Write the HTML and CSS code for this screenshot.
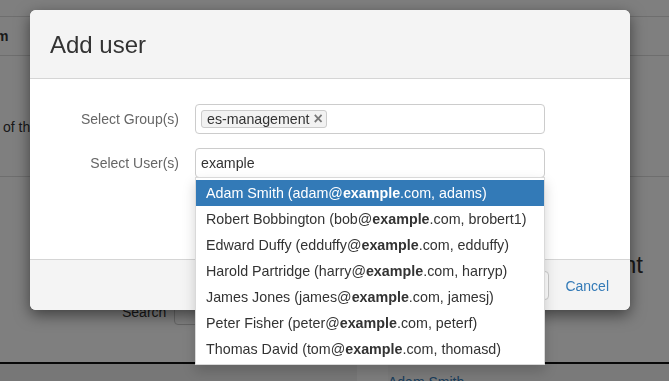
FILE: index.html
```html
<!DOCTYPE html>
<html lang="en">
<head>
    <meta charset="UTF-8">
    <meta name="viewport" content="width=device-width, initial-scale=1.0">
    <title>Add user</title>
    <link rel="stylesheet" href="styles.css">
</head>
<body>
<div class="page">
    <table class="groups">
        <thead>
            <tr><th>Team</th></tr>
        </thead>
        <tbody>
            <tr><td>of the group can manage its members and settings.</td></tr>
        </tbody>
    </table>
    <h3 class="section-title">Group management</h3>
    <div class="search-row">
        <label for="search">Search</label>
        <input id="search" type="text">
    </div>
    <table class="members">
        <tr>
            <td class="pad"></td>
            <td class="check"></td>
            <td><a href="#">Adam Smith</a></td>
        </tr>
    </table>
</div>

<div class="backdrop"></div>

<div class="modal">
    <div class="modal-header">
        <h4>Add user</h4>
    </div>
    <div class="modal-body">
        <div class="form-row">
            <label>Select Group(s)</label>
            <div class="select-box">
                <span class="tag">es-management <span class="tag-remove">&times;</span></span>
            </div>
        </div>
        <div class="form-row">
            <label>Select User(s)</label>
            <div class="select-wrap">
                <div class="select-box">
                    <span class="query">example</span>
                </div>
                <ul class="results">
                    <li class="active">Adam Smith (adam@<b>example</b>.com, adams)</li>
                    <li>Robert Bobbington (bob@<b>example</b>.com, brobert1)</li>
                    <li>Edward Duffy (edduffy@<b>example</b>.com, edduffy)</li>
                    <li>Harold Partridge (harry@<b>example</b>.com, harryp)</li>
                    <li>James Jones (james@<b>example</b>.com, jamesj)</li>
                    <li>Peter Fisher (peter@<b>example</b>.com, peterf)</li>
                    <li>Thomas David (tom@<b>example</b>.com, thomasd)</li>
                </ul>
            </div>
        </div>
    </div>
    <div class="modal-footer">
        <button type="button" class="btn">Add users</button>
        <a href="#" class="cancel">Cancel</a>
    </div>
</div>
</body>
</html>
```

FILE: styles.css
```css
body {
    margin: 0;
    font-family: "Liberation Sans", Arial, sans-serif;
    font-size: 14px;
    color: #333;
    background: #fff;
    overflow: hidden;
}
.page {
    padding-top: 16px;
}
table {
    width: 100%;
    border-collapse: collapse;
}
.groups th {
    height: 38px;
    border-top: 1px solid #ddd;
    border-bottom: 1px solid #ddd;
    text-align: left;
    text-indent: -27px;
    padding: 0;
}
.groups td {
    height: 98px;
    border-bottom: 1px solid #ddd;
    padding: 22px 0 0 3px;
}
.section-title {
    margin: 74px 26px 0 0;
    font-size: 24px;
    font-weight: normal;
    line-height: 28px;
    text-align: right;
}
.search-row {
    display: flex;
    align-items: center;
    gap: 8px;
    margin: 20px 0 0 122px;
}
.search-row input {
    width: 200px;
    height: 26px;
    border: 1px solid #ccc;
    border-radius: 4px;
    box-sizing: border-box;
}
.members {
    margin-top: 37px;
    border-top: 2px solid #111;
}
.members td {
    background: #f5f5f5;
    height: 30px;
    padding: 0;
    vertical-align: top;
    padding-top: 10px;
}
.members .pad {
    width: 357px;
    background: #efefef;
}
.members .check {
    width: 31px;
    background: #fafafa;
}
.members a {
    color: #337ab7;
    text-decoration: none;
}
.backdrop {
    position: fixed;
    inset: 0;
    background: rgba(0, 0, 0, 0.5);
}
.modal {
    position: absolute;
    left: 30px;
    top: 10px;
    width: 600px;
    background: #fff;
    border-radius: 6px;
    box-shadow: 0 5px 15px rgba(0, 0, 0, 0.5);
}
.modal-header {
    background: #f4f4f4;
    border-bottom: 1px solid #d5d5d5;
    border-radius: 6px 6px 0 0;
    padding: 21px 20px 19px;
}
.modal-header h4 {
    margin: 0;
    font-size: 24px;
    font-weight: normal;
    line-height: 28px;
    color: #333;
}
.modal-body {
    padding: 25px 0 81px 30px;
}
.form-row {
    display: grid;
    grid-template-columns: 119px 350px;
    column-gap: 16px;
    align-items: center;
    margin-bottom: 14px;
}
.form-row:last-child {
    margin-bottom: 0;
}
.form-row label {
    text-align: right;
    color: #666;
}
.select-wrap {
    position: relative;
}
.select-box {
    height: 30px;
    border: 1px solid #ccc;
    border-radius: 4px;
    box-sizing: border-box;
    padding: 0 5px;
    display: flex;
    align-items: center;
    font-size: 14.2px;
}
.tag {
    display: inline-block;
    line-height: 16px;
    padding: 0 3px 0 5px;
    background: #f2f2f2;
    border: 1px solid #ccc;
    border-radius: 3px;
    color: #333;
}
.tag-remove {
    color: #777;
    font-weight: bold;
    font-size: 16px;
}
.query {
    color: #333;
}
.results {
    position: absolute;
    left: 0;
    right: 0;
    top: calc(100% - 1px);
    margin: 0;
    padding: 2px 0;
    list-style: none;
    background: #fff;
    border: 1px solid rgba(0, 0, 0, 0.15);
    box-shadow: 0 6px 12px rgba(0, 0, 0, 0.175);
    z-index: 10;
}
.results li {
    padding: 3px 10px;
    line-height: 20px;
    font-size: 14.3px;
    white-space: nowrap;
    color: #333;
}
.results li.active {
    background: #337ab7;
    color: #fff;
}
.modal-footer {
    background: #f4f4f4;
    border-top: 1px solid #d5d5d5;
    border-radius: 0 0 6px 6px;
    padding: 11px 21px 10px;
    display: flex;
    justify-content: flex-end;
    align-items: center;
    gap: 16px;
}
.btn {
    height: 29px;
    padding: 0 12px;
    font-family: inherit;
    font-size: 14px;
    color: #333;
    background: #fff;
    border: 1px solid #ccc;
    border-radius: 4px;
}
.cancel {
    color: #337ab7;
    text-decoration: none;
}
```
